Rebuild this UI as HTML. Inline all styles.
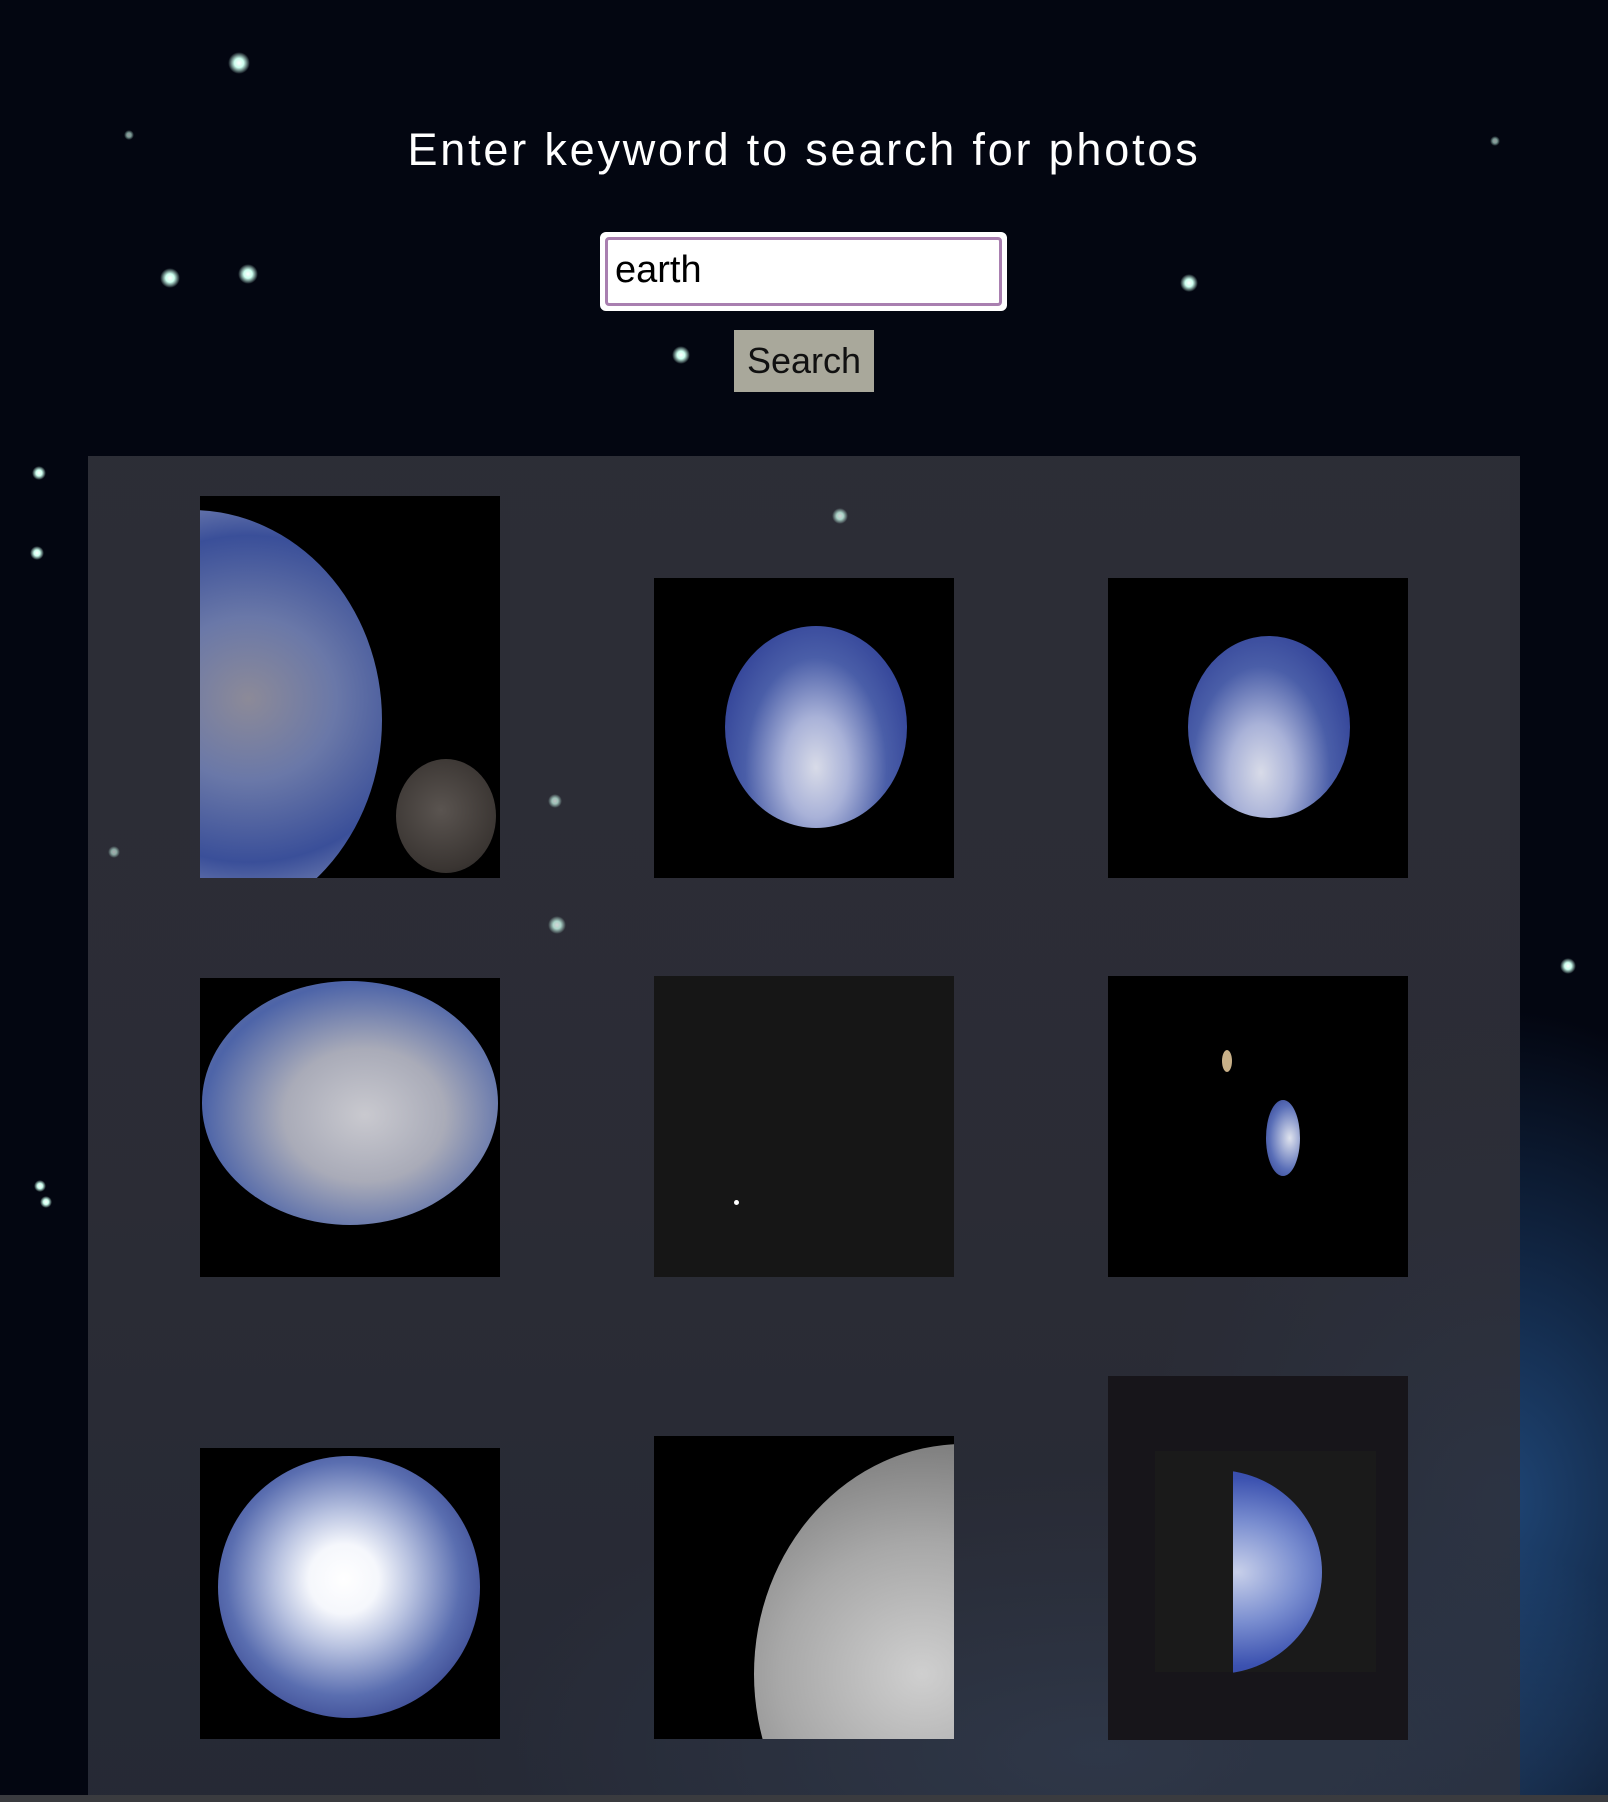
<!DOCTYPE html>
<html><head><meta charset="utf-8"><style>
html,body{margin:0;padding:0;width:1608px;height:1802px;overflow:hidden}
body{position:relative;font-family:"Liberation Sans",sans-serif;
background:
radial-gradient(ellipse 500px 700px at 1500px 1500px,rgba(40,90,150,.75),rgba(20,50,100,0) 70%),
radial-gradient(ellipse 900px 400px at 1100px 1750px,rgba(70,110,160,.7),rgba(0,0,0,0) 70%),
#030611}
.star{position:absolute;border-radius:50%;background:radial-gradient(circle,#fff 0,#cfe 30%,rgba(120,170,220,0) 70%)}
h1{position:absolute;left:0;width:1608px;top:124px;margin:0;text-align:center;color:#fff;font-weight:normal;font-size:45px;letter-spacing:2.8px}
.inp{position:absolute;left:600px;top:232px;border:3px solid #fff;border-radius:6px;background:#fff;box-sizing:border-box;width:407px;height:79px}
.inp div{position:absolute;inset:2px;border:3px solid #a97fb0;border-radius:4px;font-size:38px;line-height:60px;padding-left:7px;color:#000}
.btn{position:absolute;left:734px;top:330px;width:140px;height:62px;background:#a9a89b;color:#111;font-size:36px;text-align:center;line-height:62px}
.panel{position:absolute;left:88px;top:456px;width:1432px;height:1339px;background:linear-gradient(to bottom,rgba(46,47,56,.96) 0,rgba(46,47,56,.93) 55%,rgba(46,50,62,.8) 100%)}
.bar{position:absolute;left:0;top:1795px;width:1608px;height:7px;background:#3a3b3f}
.img{position:absolute;background:#000;overflow:hidden}
.e{position:absolute;border-radius:50%}
</style></head><body>
<div class="star" style="left:228px;top:52px;width:22px;height:22px"></div>
<div class="star" style="left:160px;top:268px;width:20px;height:20px"></div>
<div class="star" style="left:238px;top:264px;width:20px;height:20px"></div>
<div class="star" style="left:672px;top:346px;width:18px;height:18px"></div>
<div class="star" style="left:1180px;top:274px;width:18px;height:18px"></div>
<div class="star" style="left:32px;top:466px;width:14px;height:14px"></div>
<div class="star" style="left:30px;top:546px;width:14px;height:14px"></div>
<div class="star" style="left:1560px;top:958px;width:16px;height:16px"></div>
<div class="star" style="left:34px;top:1180px;width:12px;height:12px"></div>
<div class="star" style="left:40px;top:1196px;width:12px;height:12px"></div>
<div class="star" style="left:124px;top:130px;width:10px;height:10px;opacity:.6"></div>
<div class="star" style="left:1490px;top:136px;width:10px;height:10px;opacity:.6"></div>

<h1>Enter keyword to search for photos</h1>
<div class="inp"><div>earth</div></div>
<div class="btn">Search</div>

<div class="panel">
<div class="star" style="left:744px;top:52px;width:16px;height:16px;opacity:.8"></div>
<div class="star" style="left:460px;top:338px;width:14px;height:14px;opacity:.7"></div>
<div class="star" style="left:460px;top:460px;width:18px;height:18px;opacity:.8"></div>
<div class="star" style="left:20px;top:390px;width:12px;height:12px;opacity:.6"></div>
</div>

<!-- row 1 -->
<div class="img" style="left:200px;top:496px;width:300px;height:382px">
 <div class="e" style="left:-200px;top:14px;width:382px;height:420px;background:radial-gradient(ellipse at 65% 45%,#8c8a98 0,#6a78a8 25%,#3a4f99 50%,#c9cbd5 85%,#8a90b0 100%)"></div>
 <div class="e" style="left:196px;top:263px;width:100px;height:114px;background:radial-gradient(circle at 45% 45%,#5a5450,#3a3532 70%,#222 100%)"></div>
</div>
<div class="img" style="left:654px;top:578px;width:300px;height:300px">
 <div class="e" style="left:71px;top:48px;width:182px;height:202px;background:radial-gradient(ellipse at 50% 70%,#d8dbe8 0,#a9b2d8 25%,#4a5ea8 55%,#2e3e95 85%,#1a2060 100%)"></div>
</div>
<div class="img" style="left:1108px;top:578px;width:300px;height:300px">
 <div class="e" style="left:80px;top:58px;width:162px;height:182px;background:radial-gradient(ellipse at 45% 75%,#d8dbe8 0,#a9b2d8 25%,#4a5ea8 55%,#2e3e95 85%,#1a2060 100%)"></div>
</div>
<!-- row 2 -->
<div class="img" style="left:200px;top:978px;width:300px;height:299px">
 <div class="e" style="left:2px;top:3px;width:296px;height:244px;background:radial-gradient(ellipse at 55% 55%,#c9c9cf 0,#a9abb8 35%,#4d64a8 70%,#6a7498 90%,#222 100%)"></div>
</div>
<div class="img" style="left:654px;top:976px;width:300px;height:301px;background:#161616">
 <div style="position:absolute;left:80px;top:224px;width:5px;height:5px;border-radius:50%;background:#fff"></div>
</div>
<div class="img" style="left:1108px;top:976px;width:300px;height:301px">
 <div class="e" style="left:114px;top:74px;width:10px;height:22px;background:#c8b088"></div>
 <div class="e" style="left:158px;top:124px;width:34px;height:76px;background:radial-gradient(ellipse at 70% 50%,#dfe3ee,#5a6fb8 60%,#2a3a8a)"></div>
</div>
<!-- row 3 -->
<div class="img" style="left:200px;top:1448px;width:300px;height:291px">
 <div class="e" style="left:18px;top:8px;width:262px;height:262px;background:radial-gradient(circle at 48% 47%,#fff 0,#f5f7fc 18%,#b8c2e0 35%,#5a6eb0 60%,#2e3a86 85%,#101a50 100%)"></div>
</div>
<div class="img" style="left:654px;top:1436px;width:300px;height:303px">
 <div class="e" style="left:100px;top:8px;width:420px;height:460px;background:radial-gradient(ellipse at 40% 50%,#cfcfcf 0,#a8a8a8 40%,#808080 70%,#bbb 90%,#666 100%)"></div>
</div>
<div class="img" style="left:1108px;top:1376px;width:300px;height:364px;background:#17151a">
 <div style="position:absolute;left:47px;top:75px;width:221px;height:221px;background:#1a1a1a"></div>
 <div class="e" style="left:2px;top:94px;width:212px;height:204px;background:radial-gradient(ellipse at 60% 50%,#c8d0ea 0,#7a8ed0 35%,#3c52b0 65%,#2a3896 100%);clip-path:inset(0 0 0 58%)"></div>
</div>

<div class="bar"></div>
</body></html>
